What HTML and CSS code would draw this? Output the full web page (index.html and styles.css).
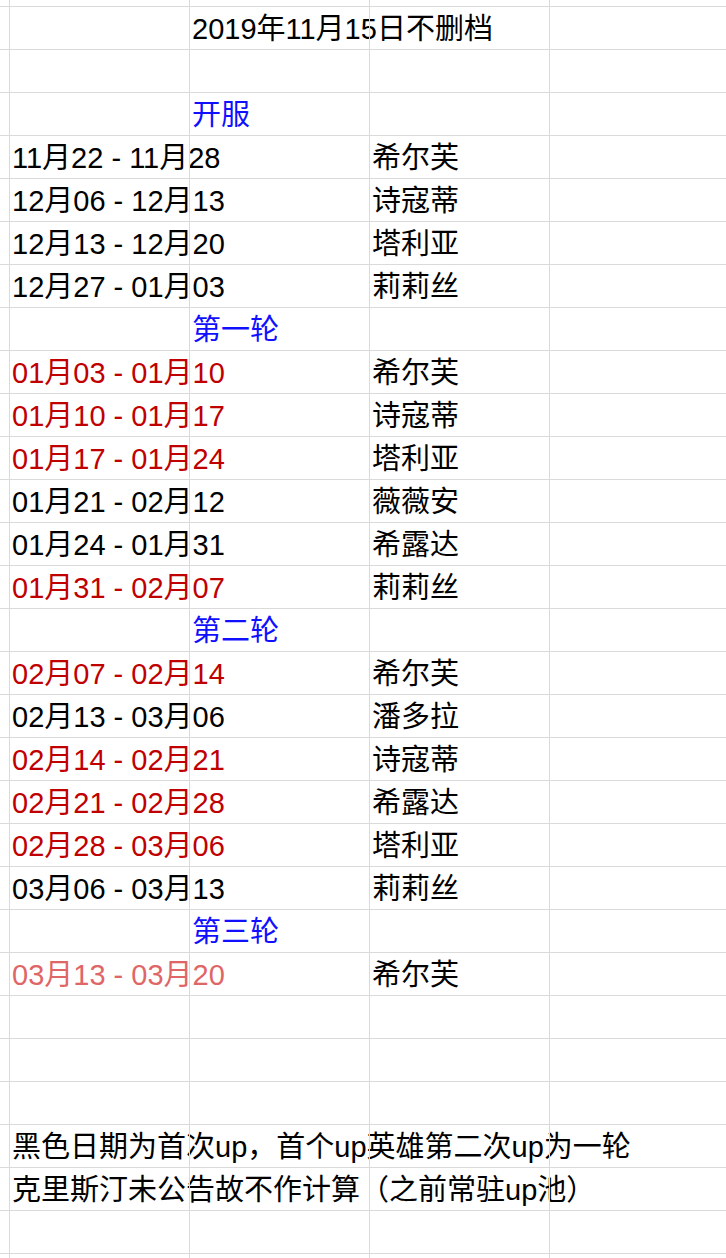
FILE: index.html
```html
<!DOCTYPE html>
<html lang='zh-CN'>
<head>
<meta charset="UTF-8"/>
<meta name="viewport" content="width=device-width, initial-scale=1"/>
<title>2019年11月15日不删档</title>
<link rel="stylesheet" href="styles.css">
</head>
<body>
<div class='sheet'>

<div class='row top'><div></div><div class='c'></div><div class='c'></div><div class='c'></div><div class='c'></div></div>

<div class='row'><div></div><div class='c'></div><div class='c'>2019年11月15日不删档</div><div class='c'></div><div class='c'></div></div>
<div class='row'><div></div><div class='c'></div><div class='c'></div><div class='c'></div><div class='c'></div></div>

<!-- 开服 -->
<div class='row'><div></div><div class='c'></div><div class='c blue'>开服</div><div class='c'></div><div class='c'></div></div>
<div class='row'><div></div><div class='c'>11月22 - 11月28</div><div class='c'></div><div class='c'>希尔芙</div><div class='c'></div></div>
<div class='row'><div></div><div class='c'>12月06 - 12月13</div><div class='c'></div><div class='c'>诗寇蒂</div><div class='c'></div></div>
<div class='row'><div></div><div class='c'>12月13 - 12月20</div><div class='c'></div><div class='c'>塔利亚</div><div class='c'></div></div>
<div class='row'><div></div><div class='c'>12月27 - 01月03</div><div class='c'></div><div class='c'>莉莉丝</div><div class='c'></div></div>

<!-- 第一轮 -->
<div class='row'><div></div><div class='c'></div><div class='c blue'>第一轮</div><div class='c'></div><div class='c'></div></div>
<div class='row'><div></div><div class='c red'>01月03 - 01月10</div><div class='c'></div><div class='c'>希尔芙</div><div class='c'></div></div>
<div class='row'><div></div><div class='c red'>01月10 - 01月17</div><div class='c'></div><div class='c'>诗寇蒂</div><div class='c'></div></div>
<div class='row'><div></div><div class='c red'>01月17 - 01月24</div><div class='c'></div><div class='c'>塔利亚</div><div class='c'></div></div>
<div class='row'><div></div><div class='c'>01月21 - 02月12</div><div class='c'></div><div class='c'>薇薇安</div><div class='c'></div></div>
<div class='row'><div></div><div class='c'>01月24 - 01月31</div><div class='c'></div><div class='c'>希露达</div><div class='c'></div></div>
<div class='row'><div></div><div class='c red'>01月31 - 02月07</div><div class='c'></div><div class='c'>莉莉丝</div><div class='c'></div></div>

<!-- 第二轮 -->
<div class='row'><div></div><div class='c'></div><div class='c blue'>第二轮</div><div class='c'></div><div class='c'></div></div>
<div class='row'><div></div><div class='c red'>02月07 - 02月14</div><div class='c'></div><div class='c'>希尔芙</div><div class='c'></div></div>
<div class='row'><div></div><div class='c'>02月13 - 03月06</div><div class='c'></div><div class='c'>潘多拉</div><div class='c'></div></div>
<div class='row'><div></div><div class='c red'>02月14 - 02月21</div><div class='c'></div><div class='c'>诗寇蒂</div><div class='c'></div></div>
<div class='row'><div></div><div class='c red'>02月21 - 02月28</div><div class='c'></div><div class='c'>希露达</div><div class='c'></div></div>
<div class='row'><div></div><div class='c red'>02月28 - 03月06</div><div class='c'></div><div class='c'>塔利亚</div><div class='c'></div></div>
<div class='row'><div></div><div class='c'>03月06 - 03月13</div><div class='c'></div><div class='c'>莉莉丝</div><div class='c'></div></div>

<!-- 第三轮 -->
<div class='row'><div></div><div class='c'></div><div class='c blue'>第三轮</div><div class='c'></div><div class='c'></div></div>
<div class='row'><div></div><div class='c pale'>03月13 - 03月20</div><div class='c'></div><div class='c'>希尔芙</div><div class='c'></div></div>

<div class='row'><div></div><div class='c'></div><div class='c'></div><div class='c'></div><div class='c'></div></div>
<div class='row'><div></div><div class='c'></div><div class='c'></div><div class='c'></div><div class='c'></div></div>
<div class='row'><div></div><div class='c'></div><div class='c'></div><div class='c'></div><div class='c'></div></div>

<!-- notes -->
<div class='row'><div></div><div class='c'>黑色日期为首次up，首个up英雄第二次up为一轮</div><div class='c'></div><div class='c'></div><div class='c'></div></div>
<div class='row'><div></div><div class='c'>克里斯汀未公告故不作计算（之前常驻up池）</div><div class='c'></div><div class='c'></div><div class='c'></div></div>
<div class='row'><div></div><div class='c'></div><div class='c'></div><div class='c'></div><div class='c'></div></div>
<div class='row'><div></div><div class='c'></div><div class='c'></div><div class='c'></div><div class='c'></div></div>

</div>
</body>
</html>
```

FILE: styles.css
```css
html, body
{
margin:0;
padding:0;
background:#fff;
overflow:hidden;
}

body
{
font-family: "Liberation Sans", "Noto Sans CJK SC", sans-serif;
font-size:29px;
color:#000;
}

.sheet
{
display:flex;
flex-direction:column;
}

.row
{
display:grid;
grid-template-columns: 9px 180px 180px 180px 1fr;
height:43px;
box-sizing:border-box;
border-top:1px solid #dadada;
line-height:44px;
}

.row.top
{
height:6px;
border-top:0;
}

.c
{
border-left:1px solid #dadada;
padding-left:2px;
white-space:nowrap;
overflow:visible;
min-width:0;
}

.blue
{
color:#1010ff;
}

.red
{
color:#c00000;
}

.pale
{
color:#df6666;
}
```
